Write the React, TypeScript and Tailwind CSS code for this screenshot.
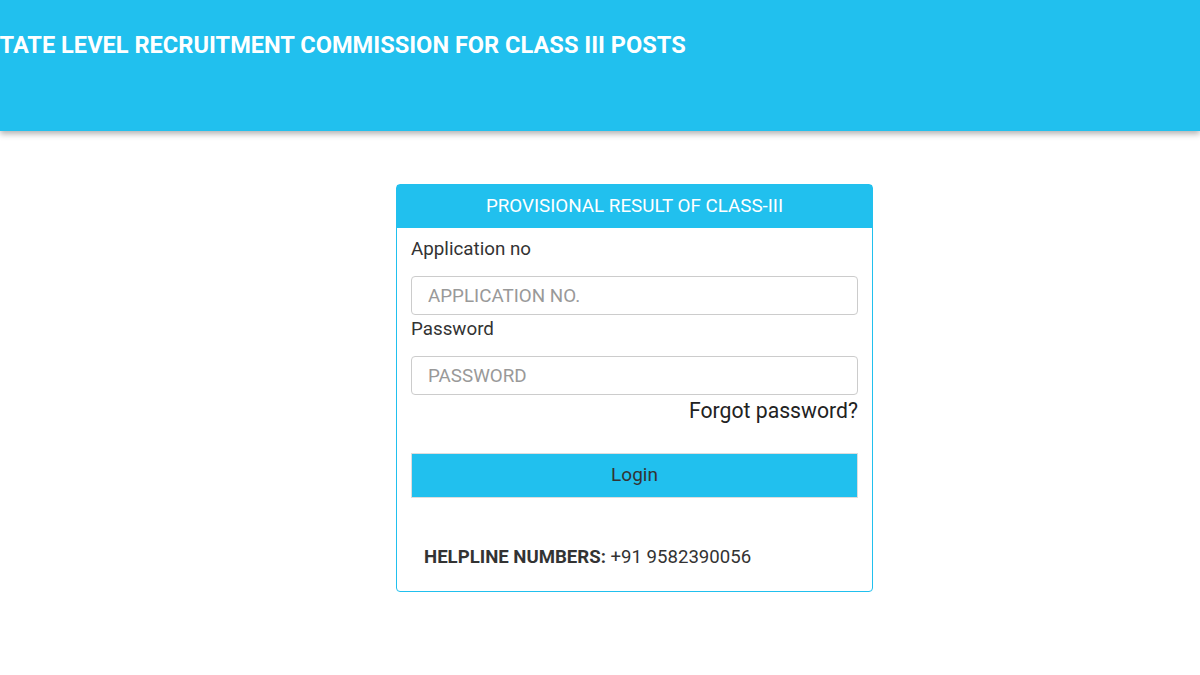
export default function App() {
  return (
    <div className="min-h-[675px] w-[1200px] bg-white font-['Roboto',sans-serif] text-[#333]">
      <header className="h-[131px] bg-[#21c0ee] shadow-[0_3px_6px_rgba(0,0,0,0.3)] overflow-hidden">
        <h1 className="ml-[-15px] pt-[30px] text-[23.6px] font-bold leading-[30px] text-white whitespace-nowrap">
          STATE LEVEL RECRUITMENT COMMISSION FOR CLASS III POSTS
        </h1>
      </header>
      <div className="pl-[396px] pt-[53px]">
        <div className="w-[477px] rounded-[4px] border border-[#21c0ee] bg-white">
          <div className="flex h-[43px] items-center justify-center bg-[#21c0ee] text-[18.8px] text-white">
            PROVISIONAL RESULT OF CLASS-III
          </div>
          <div className="px-[14px] pb-[22px]">
            <label className="block pt-[9px] text-[18.8px] leading-[24px] text-[#333]">Application no</label>
            <input
              className="mt-[15px] block h-[39px] w-full rounded-[4px] border border-[#ccc] px-[16px] text-[18.8px] placeholder:text-[#999] outline-none"
              placeholder="APPLICATION NO."
            />
            <label className="block pt-[2px] text-[18.8px] leading-[24px] text-[#333]">Password</label>
            <input
              className="mt-[15px] block h-[39px] w-full rounded-[4px] border border-[#ccc] px-[16px] text-[18.8px] placeholder:text-[#999] outline-none"
              placeholder="PASSWORD"
            />
            <div className="flex justify-end pt-[2px]">
              <a className="text-[21.2px] leading-[28px] text-[#222]">Forgot password?</a>
            </div>
            <button className="mt-[28px] block h-[45px] w-full border border-[#ddd] bg-[#21c0ee] text-[19px] text-[#333]">
              Login
            </button>
            <p className="pl-[13px] pt-[47px] text-[18.6px] leading-[24px] text-[#333]">
              <b>HELPLINE NUMBERS:</b> +91 9582390056
            </p>
          </div>
        </div>
      </div>
    </div>
  );
}
